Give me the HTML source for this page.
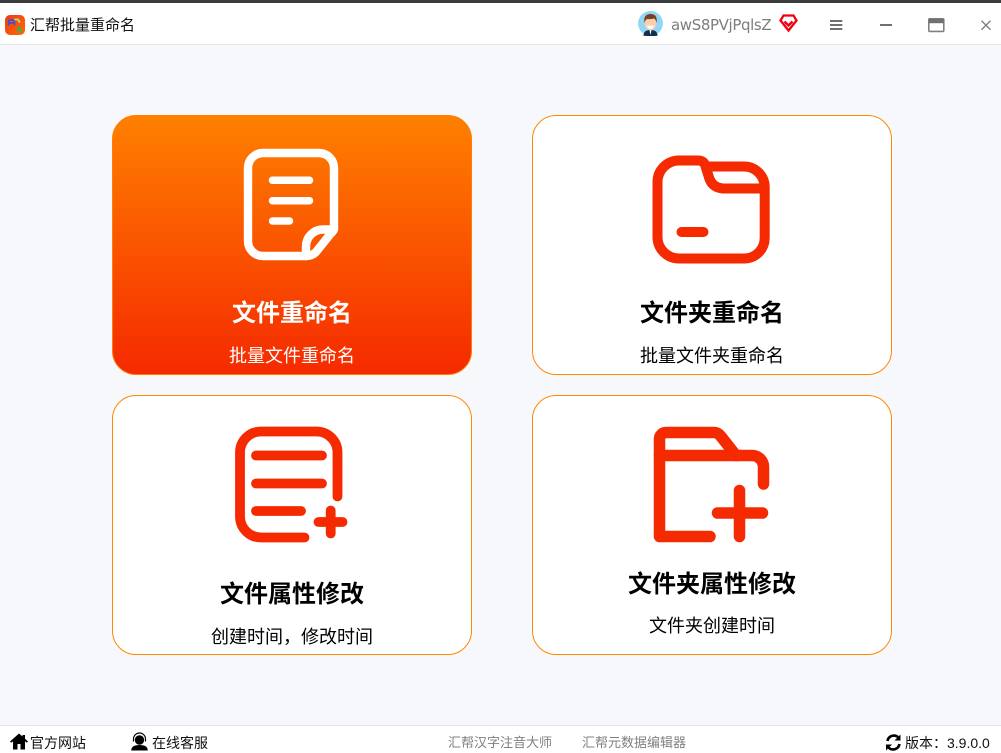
<!DOCTYPE html>
<html lang="zh"><head><meta charset="utf-8"><title>汇帮批量重命名</title>
<style>
html,body{margin:0;padding:0}
body{width:1001px;height:753px;overflow:hidden;position:relative;background:#f7f8fc;font-family:"Liberation Sans","Noto Sans CJK SC",sans-serif;color:#000}
.a{position:absolute;white-space:nowrap}
.top{position:absolute;left:0;top:0;width:1001px;height:44px;background:#fff;border-bottom:1px solid #e6e6e6}
.strip{position:absolute;left:0;top:0;width:1001px;height:3px;background:#3c3c3c}
.foot{position:absolute;left:0;top:725px;width:1001px;height:28px;background:#fff;border-top:1px solid #e6e6e6;box-sizing:border-box}
.card{position:absolute;width:360px;height:260px;box-sizing:border-box;border:1px solid #ff8a00;border-radius:24px;background:#fff}
.card.on{background:linear-gradient(180deg,#ff8000 0%,#f52a00 100%);border-color:#ff8000}
.t,.s{position:absolute;text-align:center;white-space:nowrap}
.t{font-weight:700;font-size:24px;line-height:34px;height:34px}
.s{font-size:18px;line-height:26px;height:26px}
svg{position:absolute;left:0;top:0}
</style></head><body>
<div class="top"></div><div class="strip"></div>
<div class="foot"></div>

<div class="card on" style="left:112px;top:115px"></div>
<div class="card" style="left:532px;top:115px"></div>
<div class="card" style="left:112px;top:395px"></div>
<div class="card" style="left:532px;top:395px"></div>

<svg width="1001" height="753" viewBox="0 0 1001 753" fill="none" stroke-linecap="round" stroke-linejoin="round">
<defs><linearGradient id="lg" x1="0" y1="0" x2="1" y2="1"><stop offset="0" stop-color="#ee3a18"/><stop offset="1" stop-color="#ff6a00"/></linearGradient></defs>
<!-- app logo -->
<rect x="5" y="15" width="20" height="20" rx="5" fill="url(#lg)"/>
<path d="M8.500 25v-3q0-2 2-2h2q2 0 2 2v3M8.500 23h6" stroke="#2a50e8" stroke-width="1.400"/>
<path d="M15 19.500h3l1.500 2.500" stroke="#b4e08a" stroke-width="1.800"/>
<path d="M17 32l2.200-5.500 2.200 5.500M18 30h2.500" stroke="#38b050" stroke-width="1.400"/>
<!-- avatar -->
<circle cx="650.500" cy="23.400" r="12.400" fill="#8fd6f7"/>
<path d="M643.500 35.700q0-5.700 7-5.700t7 5.700q-3 .3-7 .3t-7-.3z" fill="#12304e"/>
<path d="M649.500 30l1 5 1-5z" fill="#fff"/>
<ellipse cx="650.500" cy="23.500" rx="6" ry="6.500" fill="#fbcfae"/>
<path d="M644.500 23q-1.500-9 6-9t6 9q-.8-4-2.500-4.500q-3 1-7 .5q-1.700 1-2.500 4z" fill="#7a4022"/>
<path d="M647 25.500h7q-.8 3.500-3.500 3.500t-3.500-3.500z" fill="#fff"/>
<!-- diamond -->
<path d="M783.500 15.500h10l3 5-8 10-8-10z" stroke="#f0000f" stroke-width="2.300" stroke-linejoin="miter"/>
<path d="M784.500 21.500l4 4 4-4" stroke="#f0000f" stroke-width="2.300" stroke-linecap="butt" stroke-linejoin="miter"/>
<!-- window controls -->
<path d="M830 21h12.300M830 25h12.300M830 29h12.300" stroke="#707070" stroke-width="2" stroke-linecap="butt"/>
<path d="M880 25h12" stroke="#707070" stroke-width="2" stroke-linecap="butt"/>
<rect x="928.800" y="18.800" width="15" height="12.600" rx="1" stroke="#808080" stroke-width="1.600"/>
<rect x="928.800" y="18.800" width="15" height="4.400" fill="#707070"/>
<path d="M981.500 20.800l9 9M990.500 20.800l-9 9" stroke="#808080" stroke-width="1.400" stroke-linecap="butt"/>

<!-- icon 1: document -->
<g stroke="#fff" stroke-width="8.400">
<path d="M306 256H263a15 15 0 0 1-15-15V168a15 15 0 0 1 15-15h56a15 15 0 0 1 15 15V229.500"/>
<path d="M334 229.500H323a17 17 0 0 0-17 17V256q6 0 10-4l14-17.500q4-4 4-5z"/>
</g>
<g stroke="#fff" stroke-width="7.500">
<path d="M272.500 180.300H309.500M272.500 200.700H309.500M272.500 221H289.500"/>
</g>

<!-- icon 2: folder -->
<g stroke="#f52a00" stroke-width="10">
<path d="M698 160.500q5 0 7 4l4 13q3 10 14 11H764.700"/>
<path d="M706 166.500H744a20.700 20.700 0 0 1 20.700 20.700V238a20.500 20.500 0 0 1-20.500 20.500H679a21.500 21.500 0 0 1-21.500-21.500V182a21.500 21.500 0 0 1 21.500-21.500H698"/>
<path d="M681.500 232H703.500"/>
</g>

<!-- icon 3: list + -->
<g stroke="#f52a00" stroke-width="9.800">
<path d="M304.500 537.500H261a21 21 0 0 1-21-21V452.500a21 21 0 0 1 21-21H316.500a21 21 0 0 1 21 21V496.500"/>
<path d="M256 455.500H322M256 483.500H322M256 511H301"/>
<path d="M318.500 522H342.500M330.700 510.500V533.500"/>
</g>

<!-- icon 4: folder + -->
<g stroke="#f52a00" stroke-width="11.500">
<path d="M710 536.500H659.500V439a6.500 6.500 0 0 1 6.500-6.500H714q4 0 7 4L736 455.500H752a11.500 11.500 0 0 1 11.500 11.500V484"/>
<path d="M659.500 455.500H736"/>
<path d="M717.500 513H762.500M739.500 490.500V536.500"/>
</g>

<!-- footer icons -->
<path d="M19 733.500l-9 8 1.200 1.300 1.800-1.500V749.500h4.500v-5.500h3v5.500H25V741.300l1.800 1.500 1.200-1.300-3-2.700V735h-2.500v1.500z" fill="#000"/>
<circle cx="139.500" cy="740" r="4.700" fill="#000"/>
<path d="M131.200 750.500q0-5.500 8.300-5.500t8.300 5.500z" fill="#000"/>
<path d="M133.500 741v-2a6 6 0 0 1 12 0v2" stroke="#000" stroke-width="1.200"/>
<path d="M887.500 741a6.500 6.500 0 0 1 11-3.500M899.500 744a6.500 6.500 0 0 1-11 3.500" stroke="#000" stroke-width="2.600" stroke-linecap="butt"/>
<path d="M900.500 734.500v6h-6zM886 750.500v-6h6z" fill="#000"/>
</svg>

<div class="a" style="left:30px;top:15px;font-size:15px;line-height:22px;color:#111">汇帮批量重命名</div>
<div class="a" style="left:671px;top:14px;font-size:15px;line-height:22px;color:#7d7d7d;font-family:'DejaVu Sans',sans-serif;letter-spacing:-.38px">awS8PVjPqlsZ</div>

<div class="t" style="left:112px;width:360px;top:297px;color:#fff">文件重命名</div>
<div class="s" style="left:112px;width:360px;top:343px;color:#fff">批量文件重命名</div>
<div class="t" style="left:532px;width:360px;top:297px">文件夹重命名</div>
<div class="s" style="left:532px;width:360px;top:343px">批量文件夹重命名</div>
<div class="t" style="left:112px;width:360px;top:578px">文件属性修改</div>
<div class="s" style="left:112px;width:360px;top:624px">创建时间，修改时间</div>
<div class="t" style="left:532px;width:360px;top:568px">文件夹属性修改</div>
<div class="s" style="left:532px;width:360px;top:613px">文件夹创建时间</div>

<div class="a" style="left:30px;top:733px;font-size:14px;line-height:20px;color:#111">官方网站</div>
<div class="a" style="left:152px;top:733px;font-size:14px;line-height:20px;color:#111">在线客服</div>
<div class="a" style="left:448px;top:733px;font-size:13px;line-height:20px;color:#808080">汇帮汉字注音大师</div>
<div class="a" style="left:582px;top:733px;font-size:13px;line-height:20px;color:#808080">汇帮元数据编辑器</div>
<div class="a" style="left:905px;top:733px;font-size:14px;line-height:20px;color:#111">版本：3.9.0.0</div>
</body></html>
